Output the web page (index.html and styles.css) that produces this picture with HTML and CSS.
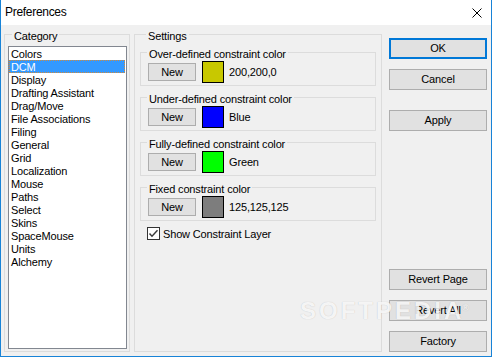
FILE: index.html
```html
<!DOCTYPE html>
<html>
<head>
<meta charset="utf-8">
<link rel="stylesheet" href="styles.css">
</head>
<body>
<div class="window">
  <div class="titlebar">
    <span class="title">Preferences</span>
    <svg class="close" width="10" height="10" viewBox="0 0 10 10"><path d="M0.5 0.5L9.5 9.5M9.5 0.5L0.5 9.5" stroke="#000" stroke-width="1" fill="none"/></svg>
  </div>
  <div class="content">
    <div class="group category">
      <div class="group-label">Category</div>
      <ul class="listbox">
        <li>Colors</li>
        <li class="selected">DCM</li>
        <li>Display</li>
        <li>Drafting Assistant</li>
        <li>Drag/Move</li>
        <li>File Associations</li>
        <li>Filing</li>
        <li>General</li>
        <li>Grid</li>
        <li>Localization</li>
        <li>Mouse</li>
        <li>Paths</li>
        <li>Select</li>
        <li>Skins</li>
        <li>SpaceMouse</li>
        <li>Units</li>
        <li>Alchemy</li>
      </ul>
    </div>
    <div class="group settings">
      <div class="group-label">Settings</div>
      <div class="group subgroup first">
        <div class="group-label">Over-defined constraint color</div>
        <div class="color-row"><button class="btn btn-new">New</button><span class="swatch yellow"></span><span class="value">200,200,0</span></div>
      </div>
      <div class="group subgroup">
        <div class="group-label">Under-defined constraint color</div>
        <div class="color-row"><button class="btn btn-new">New</button><span class="swatch blue"></span><span class="value">Blue</span></div>
      </div>
      <div class="group subgroup">
        <div class="group-label">Fully-defined constraint color</div>
        <div class="color-row"><button class="btn btn-new">New</button><span class="swatch green"></span><span class="value">Green</span></div>
      </div>
      <div class="group subgroup">
        <div class="group-label">Fixed constraint color</div>
        <div class="color-row"><button class="btn btn-new">New</button><span class="swatch gray"></span><span class="value">125,125,125</span></div>
      </div>
      <label class="check-row"><span class="checkbox"><svg width="11" height="11" viewBox="0 0 11 11"><polyline points="1.5,5.5 4,8.3 9.5,2.2" fill="none" stroke="#3a3a3a" stroke-width="1.4"/></svg></span><span class="check-text">Show Constraint Layer</span></label>
    </div>
    <div class="buttons">
      <div class="btn-stack">
        <button class="btn default">OK</button>
        <button class="btn">Cancel</button>
        <button class="btn apply">Apply</button>
      </div>
      <div class="btn-stack">
        <button class="btn">Revert Page</button>
        <button class="btn">Revert All</button>
        <button class="btn">Factory</button>
      </div>
    </div>
  </div>
  <div class="watermark">SOFTPEDIA<span class="reg">®</span></div>
</div>
</body>
</html>
```
FILE: styles.css
```css
html, body {
  margin: 0;
  padding: 0;
  background: #ffffff;
}

.window {
  position: relative;
  width: 492px;
  height: 357px;
  box-sizing: border-box;
  border: 1px solid #1883d7;
  border-top: none;
  background: #f0f0f0;
  font-family: "Liberation Sans", Arial, sans-serif;
  font-size: 11px;
  letter-spacing: -0.15px;
  color: #000;
  display: flex;
  flex-direction: column;
  overflow: hidden;
}

.titlebar {
  flex: none;
  height: 25px;
  background: #ffffff;
  display: flex;
  align-items: center;
  justify-content: space-between;
  padding: 0 9px 0 4px;
}

.title {
  font-size: 12px;
  letter-spacing: -0.3px;
  line-height: 25px;
}

.close {
  display: block;
  margin-top: 1px;
}

.content {
  flex: 1;
  min-height: 0;
  display: flex;
  padding: 9px 4px 4px 3px;
}

.group {
  border: 1px solid #dcdcdc;
  display: flex;
  flex-direction: column;
}

.group-label {
  align-self: flex-start;
  margin: -5px 0 0 6px;
  padding: 0 2px;
  background: #f0f0f0;
  line-height: 13px;
  white-space: nowrap;
}

.category {
  flex: none;
  width: 126px;
  box-sizing: border-box;
}

.category .group-label {
  margin-left: 7px;
}

.listbox {
  list-style: none;
  margin: 3px 2px 2px 3px;
  padding: 0;
  flex: 1;
  background: #ffffff;
  border: 1px solid #828790;
  overflow: hidden;
}

.listbox li {
  height: 13px;
  line-height: 15px;
  padding-left: 2px;
  margin-right: 1px;
  white-space: nowrap;
  overflow: hidden;
}

.listbox li.selected {
  background: #3399ff;
  color: #ffffff;
  outline: 1px dotted #d08a3c;
  outline-offset: -1px;
}

.settings {
  flex: none;
  width: 248px;
  box-sizing: border-box;
  margin-left: 4px;
  padding: 0 5px;
}

.subgroup {
  margin-top: 11px;
}

.subgroup.first {
  margin-top: 9px;
}

.color-row {
  display: flex;
  align-items: center;
  height: 22px;
  padding: 0 0 2px 7px;
}

.btn {
  box-sizing: border-box;
  border: 1px solid #adadad;
  background: #e1e1e1;
  color: #000;
  font: inherit;
  letter-spacing: inherit;
  padding: 0;
  margin: 0;
  height: 21px;
  line-height: 19px;
  text-align: center;
}

.btn-new {
  width: 48px;
  height: 18px;
  line-height: 16px;
}

.swatch {
  width: 22px;
  height: 22px;
  box-sizing: border-box;
  border: 1px solid #000;
  margin-left: 6px;
}

.yellow { background: #c8c800; }
.blue { background: #0000ff; }
.green { background: #00ff00; }
.gray { background: #7d7d7d; }

.value {
  margin-left: 5px;
  white-space: nowrap;
}

.check-row {
  display: flex;
  align-items: center;
  height: 13px;
  margin: 6px 0 0 7px;
}

.checkbox {
  width: 13px;
  height: 13px;
  box-sizing: border-box;
  border: 1px solid #333333;
  background: #ffffff;
  display: flex;
}

.checkbox svg {
  display: block;
}

.check-text {
  margin-left: 3px;
  white-space: nowrap;
}

.buttons {
  flex: none;
  width: 98px;
  box-sizing: border-box;
  margin-left: 7px;
  padding-top: 4px;
  display: flex;
  flex-direction: column;
  justify-content: space-between;
}

.btn-stack {
  display: flex;
  flex-direction: column;
  gap: 10px;
}

.btn.default {
  border: 2px solid #0078d7;
  line-height: 17px;
}

.btn.apply {
  margin-top: 10px;
}

.watermark {
  position: absolute;
  left: 299px;
  top: 299px;
  font-size: 24px;
  line-height: 24px;
  font-weight: bold;
  letter-spacing: 3px;
  color: rgba(255, 255, 255, 0.85);
  text-shadow: 0 0 1px rgba(0, 0, 0, 0.22);
  white-space: nowrap;
  pointer-events: none;
}

.reg {
  font-size: 9px;
  letter-spacing: 0;
  vertical-align: top;
  position: relative;
  top: -3px;
  margin-left: -2px;
}
```
